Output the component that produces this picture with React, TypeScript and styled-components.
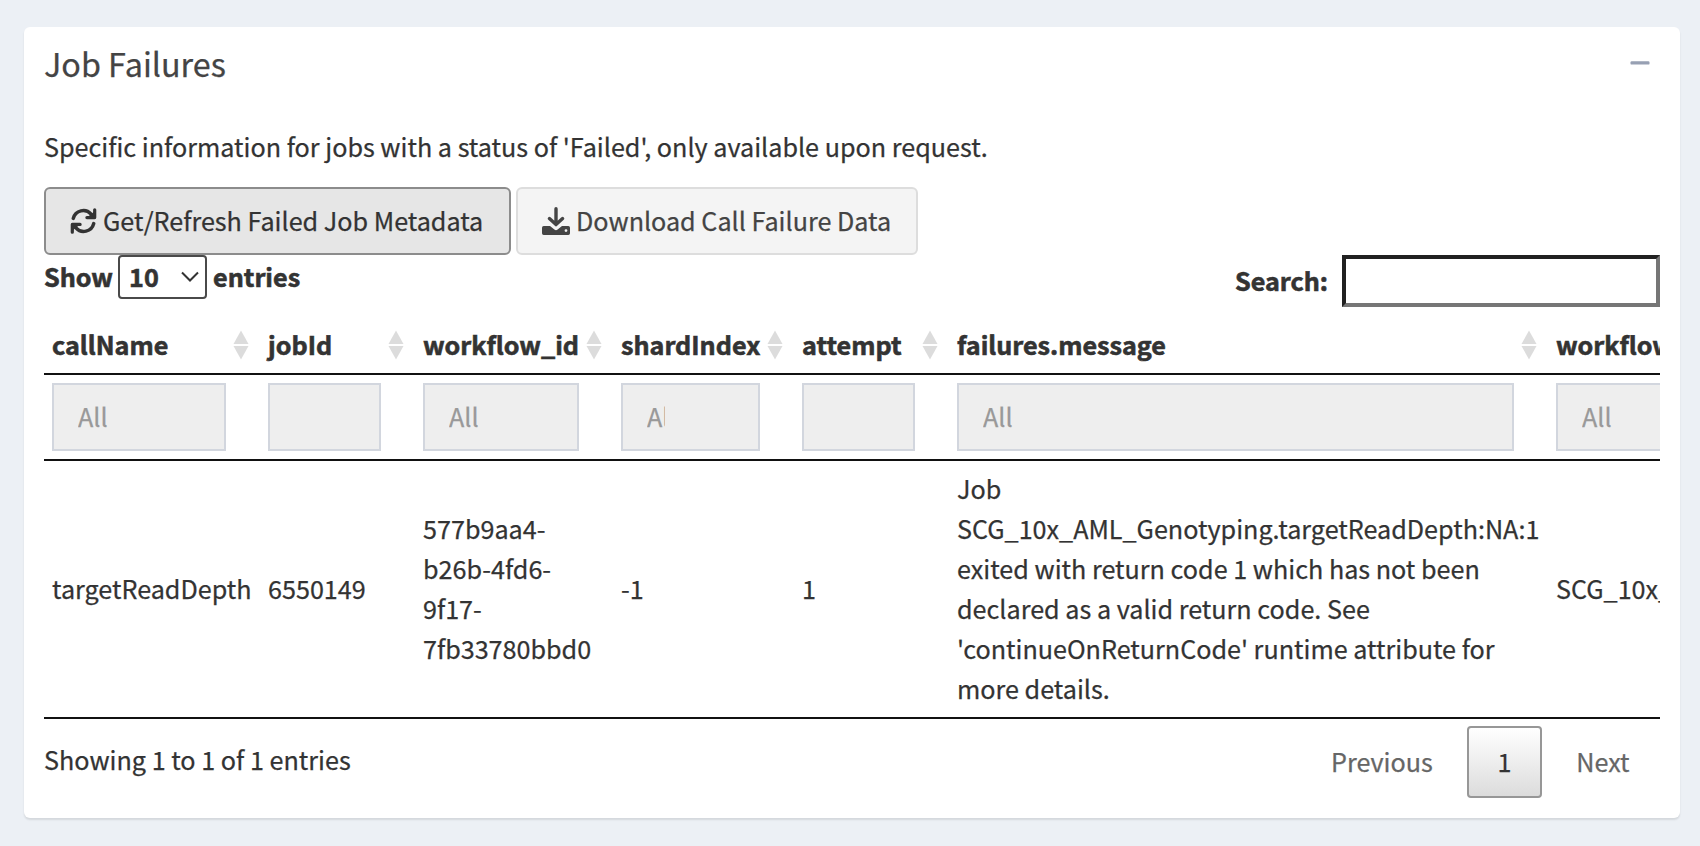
import React from "react";
import styled, { createGlobalStyle } from "styled-components";

const GlobalStyle = createGlobalStyle`
  *, *::before, *::after { box-sizing: border-box; }
  body {
    margin: 0;
    background: #ecf0f5;
    color: #333;
    font-family: "Noto Sans CJK SC", "Source Sans Pro", sans-serif;
    font-size: 25.17px;
    line-height: 40px;
    -webkit-text-stroke: 0.25px;
    overflow: hidden;
  }
  button, input, select { font: inherit; color: inherit; margin: 0; }
`;

const Page = styled.main`
  height: 846px;
  padding: 27px 20px 28px 24px;
`;

const Box = styled.section`
  height: 791px;
  padding: 0 20px;
  background: #fff;
  border-radius: 6px;
  box-shadow: 0 2px 2px rgba(0, 0, 0, 0.1);
`;

const BoxHeader = styled.header`
  display: flex;
  justify-content: space-between;
  padding-top: 16px;
  height: 99px;
`;

const BoxTitle = styled.h3`
  margin: 0;
  color: #444;
  font-size: 32.35px;
  font-weight: 400;
  line-height: 40px;
`;

const CollapseButton = styled.button`
  display: flex;
  align-self: flex-start;
  margin: 8px 10px 0 0;
  padding: 0;
  border: 0;
  background: none;
  color: #97a0b3;
`;

const Description = styled.p`
  margin: 0;
  height: 61px;
`;

const Actions = styled.div`
  display: flex;
  gap: 5px;
`;

const ActionButton = styled.button<{ $active?: boolean; $width: number }>`
  display: flex;
  align-items: center;
  gap: 6px;
  width: ${(p) => p.$width}px;
  height: 68px;
  padding: 0 0 2px 24px;
  border: 2px solid ${(p) => (p.$active ? "#8c8c8c" : "#ddd")};
  border-radius: 6px;
  background: ${(p) => (p.$active ? "#e6e6e6" : "#f4f4f4")};
  color: ${(p) => (p.$active ? "#333" : "#444")};
  white-space: nowrap;

  svg { flex: none; margin-top: 2px; }
`;

const Controls = styled.div`
  display: flex;
  justify-content: space-between;
  align-items: flex-start;
  height: 61px;
  font-weight: 700;
  -webkit-text-stroke: 0.6px;
`;

const LengthLabel = styled.label`
  display: flex;
  align-items: flex-start;
`;

const LabelText = styled.span`
  padding-top: 1px;
`;

const SelectBox = styled.span`
  display: flex;
  justify-content: space-between;
  align-items: center;
  width: 89px;
  height: 44px;
  margin: 0 6px 0 5px;
  padding: 0 6px 2px 9px;
  border: 2px solid #4a4a4a;
  border-radius: 4px;

  svg { margin-top: 2px; }
`;

const SearchLabel = styled.label`
  display: flex;
  gap: 14px;
`;

const SearchText = styled.span`
  padding-top: 5px;
`;

const SearchInput = styled.input`
  width: 318px;
  height: 52px;
  border: 4px solid;
  border-color: #212121 #767676 #767676 #212121;
  border-radius: 0;
  background: #fff;
`;

const TableScroller = styled.div`
  width: 1616px;
  overflow: hidden;
`;

const Table = styled.table`
  width: 2026px;
  table-layout: fixed;
  border-collapse: separate;
  border-spacing: 0;
  border-bottom: 2px solid #111;
`;

const HeadCell = styled.th`
  height: 59px;
  padding: 0 10px 0 8px;
  border-bottom: 2px solid #111;
  text-align: left;
  white-space: nowrap;
  -webkit-text-stroke: 0.6px;
`;

const HeadContent = styled.div`
  display: flex;
  justify-content: space-between;
  align-items: center;
  height: 57px;
  padding-bottom: 2px;

  svg { margin-top: 2px; flex: none; }
`;

const FilterCell = styled.td`
  height: 86px;
  padding: 8px 34px 8px 8px;
  border-bottom: 2px solid #111;
`;

const FilterInput = styled.input<{ $numeric?: boolean }>`
  display: block;
  width: 100%;
  height: 68px;
  padding: 0 ${(p) => (p.$numeric ? 24 : 93)}px 2px 24px;
  border: 2px solid #d2d6de;
  border-radius: 0;
  background: #eee;

  &::placeholder { color: #999; opacity: 1; }
`;

const Cell = styled.td`
  padding: 7px 8px 9px;
  vertical-align: middle;
`;

const Footer = styled.footer`
  display: flex;
  justify-content: space-between;
  padding-top: 7px;
`;

const Info = styled.div`
  padding-top: 13px;
`;

const Pagination = styled.nav`
  display: flex;
  gap: 4px;
`;

const PageButton = styled.button<{ $current?: boolean }>`
  height: 72px;
  padding: 0 28.4px 3px;
  border: 2px solid ${(p) => (p.$current ? "#979797" : "transparent")};
  border-radius: 4px;
  background: ${(p) => (p.$current ? "linear-gradient(#fff, #dcdcdc)" : "none")};
  color: ${(p) => (p.$current ? "#333" : "#666")};
`;

const MinusIcon = () => (
  <svg width="20" height="24" viewBox="0 0 20 24" fill="currentColor">
    <rect x="0.5" y="10.2" width="19" height="3.4" rx="1.2" />
  </svg>
);

const RefreshIcon = () => (
  <svg width="27" height="26" viewBox="0 0 26 26" fill="none" stroke="currentColor" strokeLinecap="round" strokeLinejoin="round">
    <g id="refresh-half">
      <path d="M2.8 10.4A10.3 10.3 0 0 1 20.6 6.2" strokeWidth="3.5" />
      <path d="M24.2 1.8V9.6H16.4" strokeWidth="3.2" />
      <path d="M24.2 4.4V9.6H18z" fill="currentColor" strokeWidth="2" />
    </g>
    <use href="#refresh-half" transform="rotate(180 13 13)" />
  </svg>
);

const DownloadIcon = () => (
  <svg width="28" height="28" viewBox="0 0 28 28" fill="none">
    <path d="M14 1.7V17.6M7.4 11.6 14 17.6 20.6 11.6" stroke="currentColor" strokeWidth="3.4" strokeLinecap="round" strokeLinejoin="round" />
    <path
      fill="currentColor"
      fillRule="evenodd"
      d="M1.7 19H8l4.4 3.6q1.6 1.2 3.2 0L20 19h6.3Q28 19 28 20.7v5.6q0 1.7-1.7 1.7H1.7Q0 28 0 26.3v-5.6Q0 19 1.7 19zM24 22.2a1.4 1.4 0 1 0 0 2.8 1.4 1.4 0 0 0 0-2.8z"
    />
  </svg>
);

const SortIcon = () => (
  <svg width="18" height="32" viewBox="0 0 18 32" fill="#dcdcdc">
    <path d="M9 1.5 16.5 15h-15z" />
    <path d="M9 30.5 16.5 17h-15z" />
  </svg>
);

const ChevronDown = () => (
  <svg width="18" height="12" viewBox="0 0 18 12" fill="none" stroke="#333" strokeWidth="2">
    <path d="M1 1.5 9 9.5 17 1.5" />
  </svg>
);

const columns = [
  { name: "callName", width: 216, value: "targetReadDepth" },
  { name: "jobId", width: 155, value: "6550149", numeric: true },
  { name: "workflow_id", width: 198, value: "577b9aa4-b26b-4fd6-9f17-7fb33780bbd0" },
  { name: "shardIndex", width: 181, value: "-1" },
  { name: "attempt", width: 155, value: "1", numeric: true },
  {
    name: "failures.message",
    width: 599,
    value:
      "Job SCG_10x_AML_Genotyping.targetReadDepth:NA:1 exited with return code 1 which has not been declared as a valid return code. See 'continueOnReturnCode' runtime attribute for more details.",
  },
  { name: "workflow_name", width: 522, value: "SCG_10x_AML_Genotyping" },
];

export default function App() {
  return (
    <>
      <GlobalStyle />
      <Page>
        <Box>
          <BoxHeader>
            <BoxTitle>Job Failures</BoxTitle>
            <CollapseButton aria-label="Collapse">
              <MinusIcon />
            </CollapseButton>
          </BoxHeader>
          <Description>
            Specific information for jobs with a status of 'Failed', only available upon request.
          </Description>
          <Actions>
            <ActionButton $active $width={467}>
              <RefreshIcon />
              Get/Refresh Failed Job Metadata
            </ActionButton>
            <ActionButton $width={402}>
              <DownloadIcon />
              Download Call Failure Data
            </ActionButton>
          </Actions>
          <Controls>
            <LengthLabel>
              <LabelText>Show</LabelText>
              <SelectBox>
                10
                <ChevronDown />
              </SelectBox>
              <LabelText>entries</LabelText>
            </LengthLabel>
            <SearchLabel>
              <SearchText>Search:</SearchText>
              <SearchInput type="search" />
            </SearchLabel>
          </Controls>
          <TableScroller>
            <Table>
              <colgroup>
                {columns.map((c) => (
                  <col key={c.name} width={c.width} />
                ))}
              </colgroup>
              <thead>
                <tr>
                  {columns.map((c) => (
                    <HeadCell key={c.name}>
                      <HeadContent>
                        {c.name}
                        <SortIcon />
                      </HeadContent>
                    </HeadCell>
                  ))}
                </tr>
                <tr>
                  {columns.map((c) => (
                    <FilterCell key={c.name}>
                      <FilterInput $numeric={c.numeric} placeholder={c.numeric ? "" : "All"} />
                    </FilterCell>
                  ))}
                </tr>
              </thead>
              <tbody>
                <tr>
                  {columns.map((c) => (
                    <Cell key={c.name}>{c.value}</Cell>
                  ))}
                </tr>
              </tbody>
            </Table>
          </TableScroller>
          <Footer>
            <Info>Showing 1 to 1 of 1 entries</Info>
            <Pagination>
              <PageButton>Previous</PageButton>
              <PageButton $current>1</PageButton>
              <PageButton>Next</PageButton>
            </Pagination>
          </Footer>
        </Box>
      </Page>
    </>
  );
}
